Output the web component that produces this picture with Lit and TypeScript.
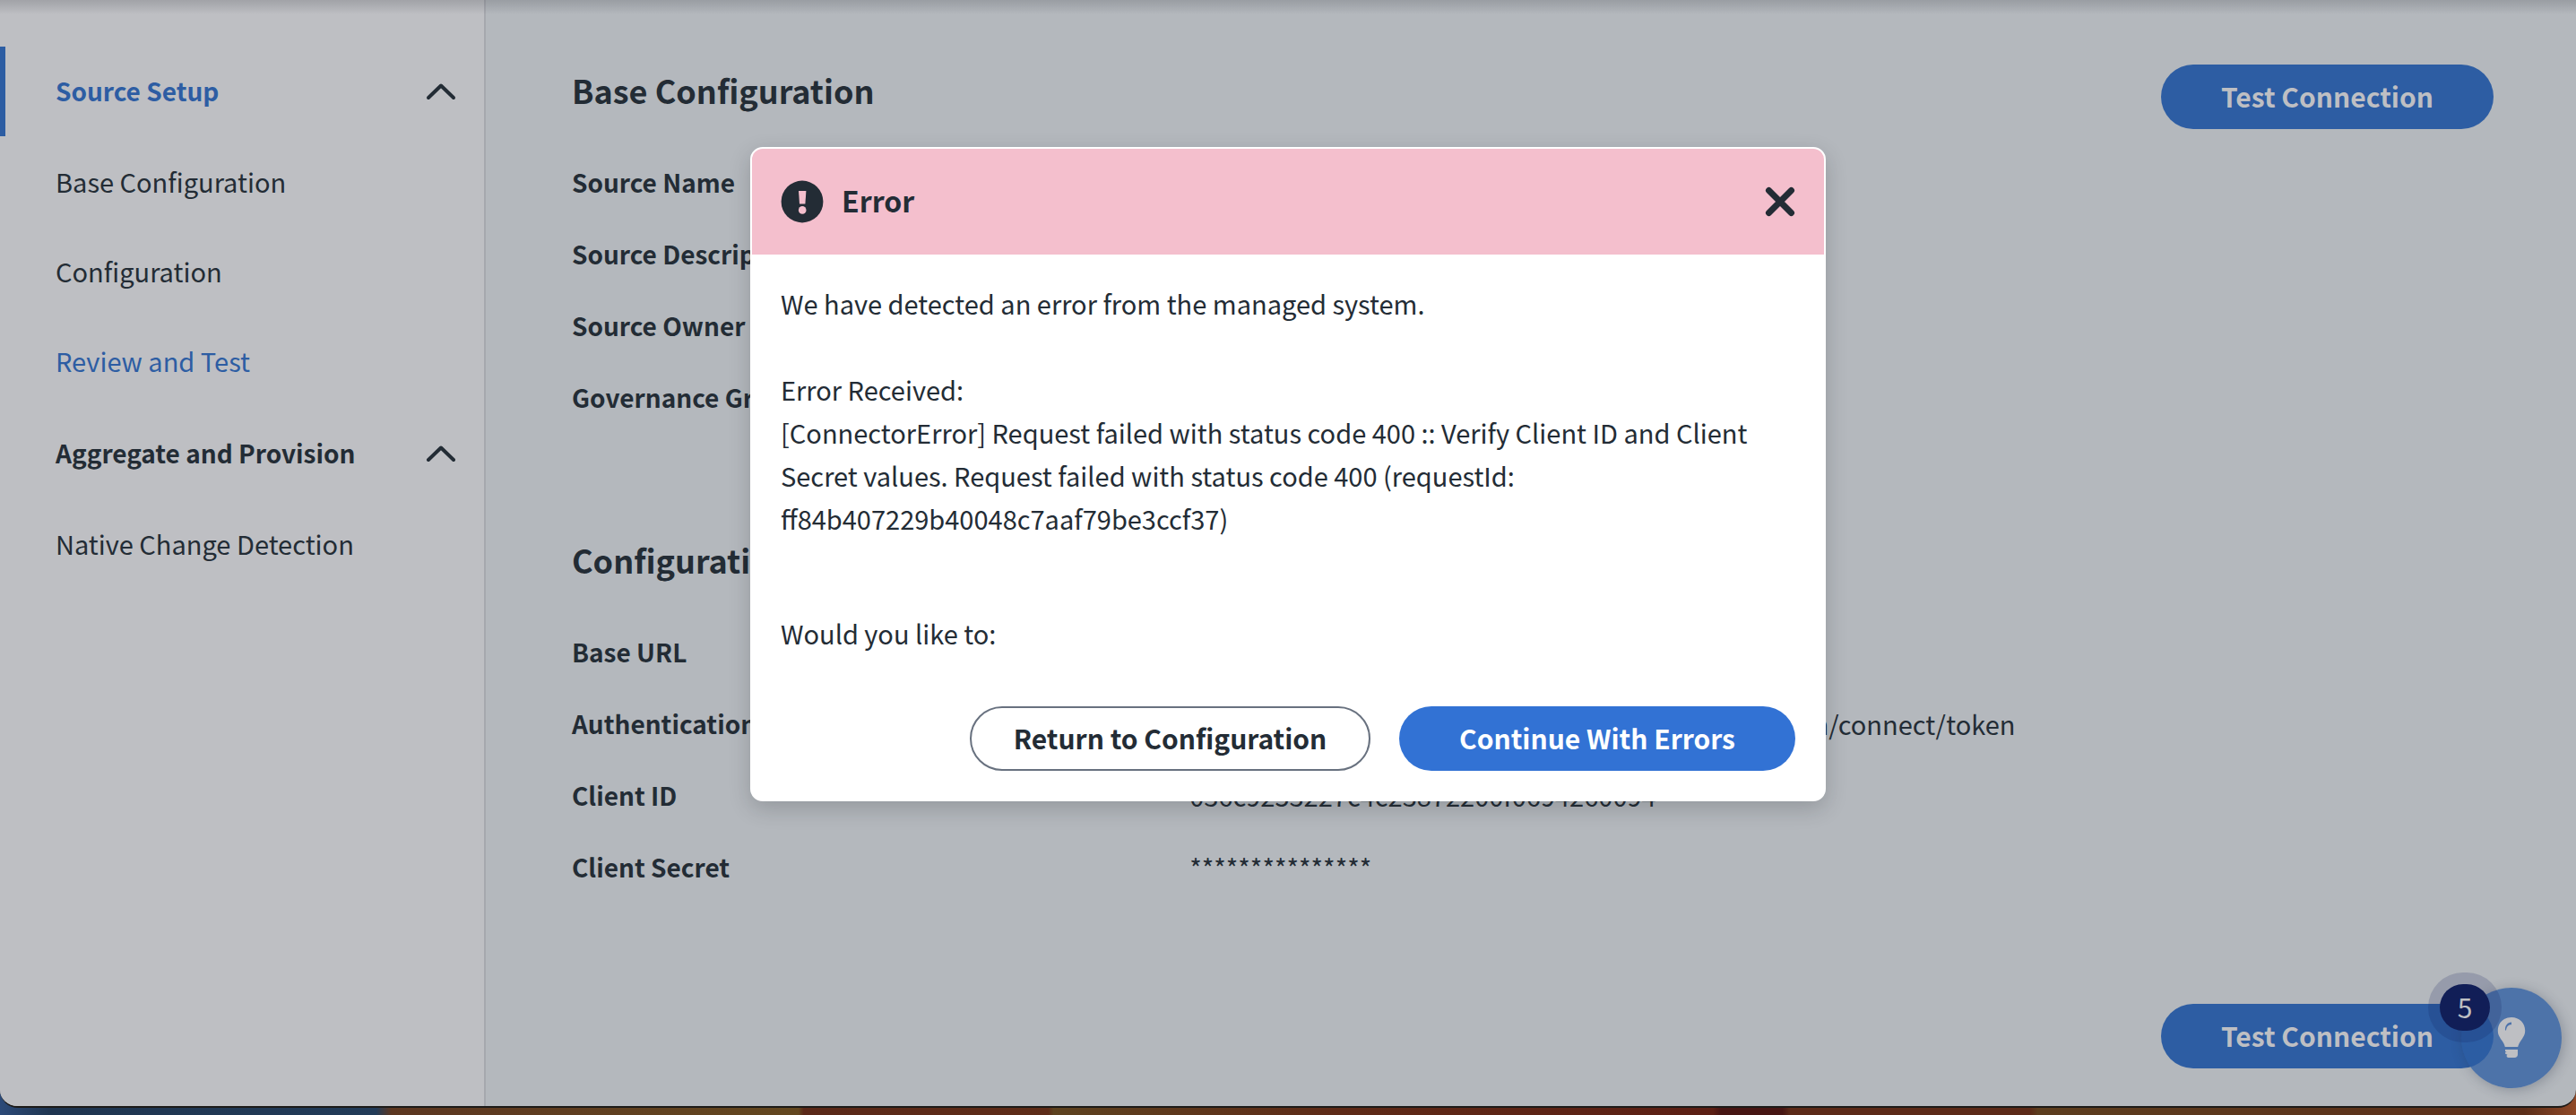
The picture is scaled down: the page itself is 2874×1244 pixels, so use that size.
import { LitElement, html, css, svg } from "lit";
import { customElement, property } from "lit/decorators.js";

const CHEVRON = svg`<svg class="chevron" viewBox="0 0 34 20" aria-hidden="true"><path d="M3 17 L17 3.5 L31 17" /></svg>`;

interface Field {
  label: string;
  value: string;
}

@customElement("side-nav")
export class SideNav extends LitElement {
  static styles = css`
    :host {
      display: block;
      width: 540px;
      flex: none;
      padding-top: 52px;
      box-sizing: border-box;
      background: #bebfc3;
      font-size: 29px;
    }
    .group {
      display: flex;
      align-items: center;
      justify-content: space-between;
      width: 100%;
      height: 100px;
      margin: 0 0 2px;
      padding: 0 31px 0 56px;
      border: 0;
      border-left: 6px solid transparent;
      background: none;
      color: #232c35;
      font: 700 28px/40px "Noto Sans CJK SC", sans-serif;
      box-sizing: border-box;
      text-align: left;
    }
    .group span {
      padding-bottom: 2px;
    }
    .group.current {
      border-left-color: #2d5da3;
      color: #2d5da3;
    }
    ul {
      margin: 0 0 2px;
      padding: 0;
      list-style: none;
    }
    .link {
      display: flex;
      align-items: center;
      height: 100px;
      padding: 0 30px 4px 62px;
      box-sizing: border-box;
      color: #232c35;
      text-decoration: none;
    }
    .link.current {
      color: #2d5da3;
    }
    .chevron {
      width: 34px;
      height: 20px;
      fill: none;
      stroke: #232c35;
      stroke-width: 4;
      stroke-linecap: round;
      stroke-linejoin: round;
    }
  `;

  render() {
    return html`
      <nav aria-label="Source">
        <button class="group current" aria-expanded="true"><span>Source Setup</span>${CHEVRON}</button>
        <ul>
          <li><a class="link" href="#base">Base Configuration</a></li>
          <li><a class="link" href="#configuration">Configuration</a></li>
          <li><a class="link current" href="#review" aria-current="page">Review and Test</a></li>
        </ul>
        <button class="group" aria-expanded="true"><span>Aggregate and Provision</span>${CHEVRON}</button>
        <ul>
          <li><a class="link" href="#native">Native Change Detection</a></li>
        </ul>
      </nav>
    `;
  }
}

@customElement("config-section")
export class ConfigSection extends LitElement {
  @property() heading = "";
  @property({ attribute: false }) fields: Field[] = [];

  static styles = css`
    :host {
      display: block;
    }
    h2 {
      margin: 0 0 55px;
      font-size: 36px;
      line-height: 56px;
      font-weight: 700;
    }
    dl {
      margin: 0;
    }
    .row {
      display: grid;
      grid-template-columns: 9fr 19fr;
      height: 80px;
      line-height: 40px;
    }
    dt {
      font-weight: 700;
    }
    dd {
      margin: 0;
      font-size: 29px;
    }
  `;

  render() {
    return html`
      <h2>${this.heading}</h2>
      <dl>
        ${this.fields.map(
          (f) => html`<div class="row"><dt>${f.label}</dt><dd>${f.value}</dd></div>`
        )}
      </dl>
    `;
  }
}

@customElement("error-dialog")
export class ErrorDialog extends LitElement {
  static styles = css`
    :host {
      position: absolute;
      inset: 0;
      display: flex;
      justify-content: center;
      align-items: flex-start;
      padding-top: 164px;
    }
    .dialog {
      width: 1200px;
      box-sizing: border-box;
      border: 2px solid #fff;
      border-radius: 14px;
      background: #fff;
      color: #232c35;
      box-shadow: 0 8px 24px rgba(20, 24, 32, 0.2);
    }
    header {
      display: flex;
      align-items: center;
      height: 118px;
      padding: 0 32px;
      border-radius: 12px 12px 0 0;
      background: #f4bfcd;
    }
    .alert {
      width: 48px;
      height: 48px;
      margin-right: 20px;
    }
    h1 {
      flex: 1;
      margin: 0;
      padding-bottom: 4px;
      font-size: 32px;
      line-height: 48px;
      font-weight: 700;
    }
    .close {
      display: flex;
      padding: 0;
      border: 0;
      background: none;
    }
    .close svg {
      width: 34px;
      height: 34px;
      stroke: #232c35;
      stroke-width: 7;
      stroke-linecap: round;
    }
    .body {
      padding: 30px 32px 10px;
      font-size: 29px;
      line-height: 48px;
    }
    p {
      margin: 0 0 48px;
    }
    .message {
      margin-bottom: 80px;
    }
    .actions {
      display: flex;
      justify-content: flex-end;
      gap: 32px;
      padding: 0 32px 32px;
    }
    .btn {
      height: 72px;
      padding: 0 0 2px;
      border-radius: 36px;
      box-sizing: border-box;
      font: 700 30px/40px "Noto Sans CJK SC", sans-serif;
    }
    .secondary {
      min-width: 447px;
      border: 2px solid #68717f;
      background: #fff;
      color: #232c35;
    }
    .primary {
      min-width: 442px;
      border: 0;
      background: #3272d4;
      color: #fff;
    }
  `;

  render() {
    return html`
      <div class="dialog" role="alertdialog" aria-modal="true" aria-labelledby="title">
        <header>
          <svg class="alert" viewBox="0 0 48 48" aria-hidden="true">
            <circle cx="24" cy="24" r="23.4" fill="#232c35" />
            <path d="M20 12h8.400l-1 14.600h-6.400z" fill="#f4bfcd" />
            <circle cx="24.200" cy="33.400" r="4.300" fill="#f4bfcd" />
          </svg>
          <h1 id="title">Error</h1>
          <button class="close" aria-label="Close">
            <svg viewBox="0 0 34 34" aria-hidden="true"><path d="M4.500 4.500 L29.500 29.500 M29.500 4.500 L4.500 29.500" /></svg>
          </button>
        </header>
        <div class="body">
          <p>We have detected an error from the managed system.</p>
          <p class="message">
            Error Received:<br />[ConnectorError] Request failed with status code 400 :: Verify Client ID and Client
            Secret values. Request failed with status code 400 (requestId: ff84b407229b40048c7aaf79be3ccf37)
          </p>
          <p>Would you like to:</p>
        </div>
        <div class="actions">
          <button class="btn secondary">Return to Configuration</button>
          <button class="btn primary">Continue With Errors</button>
        </div>
      </div>
    `;
  }
}

@customElement("app-root")
export class AppRoot extends LitElement {
  static styles = css`
    :host {
      display: block;
      position: relative;
      min-height: 100vh;
      overflow: hidden;
      box-sizing: border-box;
      padding-bottom: 8px;
      color: #232c35;
      font-family: "Noto Sans CJK SC", sans-serif;
      font-size: 28px;
      line-height: 40px;
      background: linear-gradient(
        90deg,
        #2c4a78 0,
        #1f3550 2%,
        #223b58 14.6%,
        #5c3620 15.2%,
        #63471f 31%,
        #5a2818 31.2%,
        #5e2c18 40.7%,
        #5d421f 40.9%,
        #5e2a17 52%,
        #5c1f14 66.5%,
        #471513 66.8%,
        #471513 69.2%,
        #5c2a18 69.5%,
        #5c2a18 78.8%,
        #5c3d1e 79.1%,
        #5c2e19 98%,
        #8f4827 100%
      );
    }
    .window {
      display: flex;
      min-height: calc(100vh - 8px);
      box-sizing: border-box;
      overflow: hidden;
      border-bottom: 2px solid #1c1a18;
      border-radius: 0 0 20px 20px;
      background: #b4b8bd;
    }
    .topshade {
      position: absolute;
      top: 0;
      left: 0;
      right: 0;
      height: 16px;
      background: linear-gradient(rgba(60, 64, 72, 0.22), rgba(60, 64, 72, 0.16) 30%, rgba(60, 64, 72, 0));
    }
    main {
      flex: 1;
      padding: 72px 92px 42px 96px;
      border-left: 2px solid #a6a8ae;
      display: flex;
      flex-direction: column;
    }
    .top {
      display: grid;
      grid-template-columns: 1fr;
    }
    .top > * {
      grid-area: 1 / 1;
    }
    .second {
      margin-top: 93px;
    }
    .btn {
      justify-self: end;
      align-self: start;
      width: 371px;
      height: 72px;
      padding: 0 0 2px;
      border: 0;
      border-radius: 36px;
      background: #2d5da3;
      color: #bebfc3;
      font: 700 30px/40px "Noto Sans CJK SC", sans-serif;
    }
    .btn.bottom {
      align-self: flex-end;
      margin-top: auto;
    }
    .fab {
      position: absolute;
      right: 16px;
      bottom: 30px;
      display: flex;
      align-items: center;
      justify-content: center;
      width: 112px;
      height: 112px;
      padding: 0;
      border: 0;
      border-radius: 50%;
      background: rgba(45, 93, 163, 0.76);
      box-shadow: 2px 2px 14px rgba(40, 50, 70, 0.3);
    }
    .fab svg {
      width: 32px;
      height: 46px;
    }
    .badge {
      position: absolute;
      right: 96px;
      bottom: 94px;
      width: 56px;
      height: 52px;
      border-radius: 26px;
      background: #111e57;
      box-shadow: 0 0 0 13px rgba(17, 30, 87, 0.18);
      color: #bebfc3;
      font-size: 30px;
      line-height: 50px;
      text-align: center;
    }
  `;

  private base: Field[] = [
    { label: "Source Name", value: "" },
    { label: "Source Description", value: "" },
    { label: "Source Owner", value: "" },
    { label: "Governance Group", value: "" },
  ];

  private config: Field[] = [
    { label: "Base URL", value: "" },
    { label: "Authentication URL", value: "https://auth.accounts.identity-services.example.com/connect/token" },
    { label: "Client ID", value: "036c9253227c4c23872200f0694260094" },
    { label: "Client Secret", value: "***************" },
  ];

  render() {
    return html`
      <div class="window">
        <side-nav></side-nav>
        <main>
          <div class="top">
            <config-section heading="Base Configuration" .fields=${this.base}></config-section>
            <button class="btn">Test Connection</button>
          </div>
          <config-section class="second" heading="Configuration" .fields=${this.config}></config-section>
          <button class="btn bottom">Test Connection</button>
        </main>
      </div>
      <div class="topshade"></div>
      <button class="fab" aria-label="Help">
        <svg viewBox="0 0 32 46" aria-hidden="true">
          <path fill="#bebfc3" d="M16 0C7 0 .8 6.600.8 14.800c0 5 2.400 8 4.800 11.400 1.600 2.400 2.800 4.600 3.200 6.800h14.400c.4-2.200 1.600-4.400 3.200-6.800 2.400-3.400 4.800-6.400 4.800-11.400C31.200 6.600 25 0 16 0z" />
          <path fill="#bebfc3" d="M9 36h14v5.500c0 2-1.500 3.500-3.500 3.500h-7c-1.200 0-2-1-2-2.200l1-1-2.500-1.300v-1l1.500-1.200H9z" />
          <path fill="#4e73ab" d="M9 14.500C8.500 9.500 11.500 5.800 16 5.600v2.600C12.500 8 10.500 10.500 10 14.500z" />
        </svg>
      </button>
      <span class="badge">5</span>
      <error-dialog></error-dialog>
    `;
  }
}
